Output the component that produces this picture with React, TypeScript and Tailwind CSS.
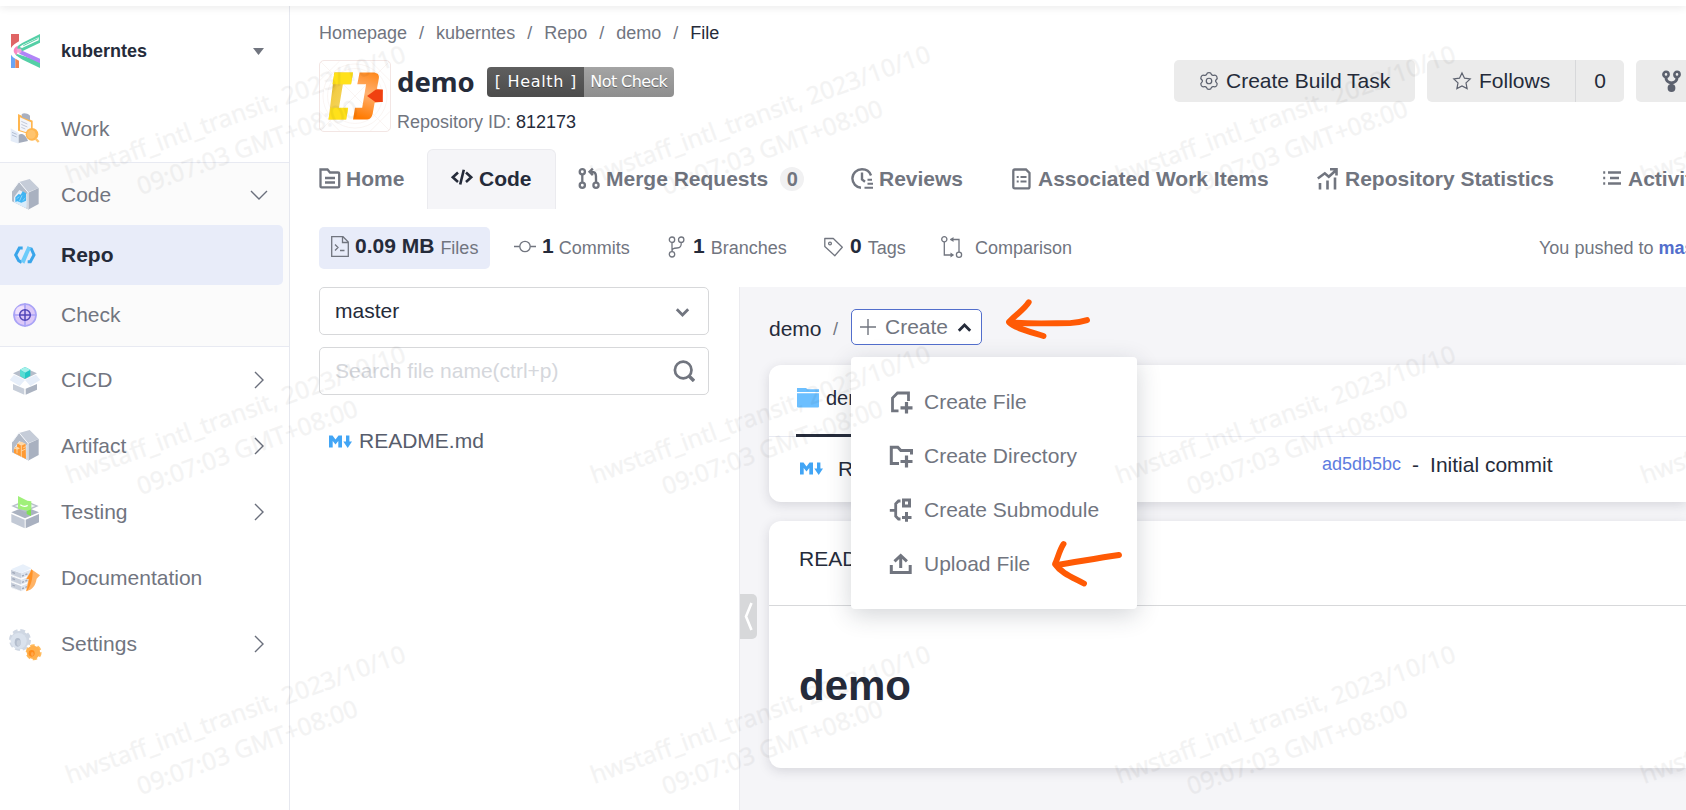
import React from "react";

type IconProps = { className?: string };

/* ---------- sidebar icons ---------- */

const KLogo = () => (
  <svg className="size-8 overflow-visible" viewBox="27 105 96 96">
    <path d="M33 102h24v22c-10 6-19 12-24 20z" fill="#e06464" />
    <path d="M33 164c4 6 8 9 13 12v28H33z" fill="#6aa5f5" />
    <path d="M46 176l11 6v22H46z" fill="#ee8350" />
    <path d="M120 102v26L68 153 46 148c4-8 12-14 22-20z" fill="#54cfa6" />
    <path d="M116 112v9L66 144l-7-3c2-2 5-4 8-6z" fill="#fff" />
    <path d="M113 116L70 137" stroke="#54cfa6" strokeWidth="3" />
    <path d="M44 160l76 24v20l-52-25c-10-5-19-11-24-19z" fill="#54cfa6" />
    <path d="M60 149l60 27v14L58 161z" fill="#b184f7" />
    <path d="M41 152c0-6 4-11 12-15l-2 28c-6-3-10-7-10-13z" fill="#fb86c0" />
    <path d="M50 146h14v12H50z" fill="#f3a4d8" />
  </svg>
);

const WorkIcon = () => (
  <svg className="size-8 overflow-visible" viewBox="27 339 96 96">
    <path d="M54 342l44 20v44l-44-14z" fill="#ffb64f" />
    <path d="M60 352l33 15v34l-33-10z" fill="#f3f5fb" />
    <path d="M65 343c5-5 16-4 25 4v14l-24-9z" fill="#a9b0c0" />
    <path d="M64 364l18 8M64 373l18 8M64 382l12 5" stroke="#c2c8d8" strokeWidth="3" />
    <path d="M32 385l24 14v32l-24-8z" fill="#e4ecf8" />
    <path d="M36 397l14 6M36 405l14 6" stroke="#a9b6cc" strokeWidth="2.5" />
    <path d="M56 405c6-6 20-4 28 18l-28 6z" fill="#a4acbc" />
    <circle cx="96" cy="403" r="19" fill="#ffb64f" />
    <circle cx="94" cy="403" r="13" fill="#ffc46e" />
    <path d="M107 416l9 10" stroke="#ffc46e" strokeWidth="7" />
  </svg>
);

const House = ({ children }: { children: React.ReactNode }) => (
  <svg className="size-8 overflow-visible" viewBox="27 537 96 96">
    <path d="M36 574l21-28 27 31v51l-48-24z" fill="#b3bbc8" />
    <path d="M42 592l16-22 22 12v42l-38-18z" fill="#e9eef6" />
    <path d="M57 546l32-9 27 27-32 13z" fill="#c5ccd8" />
    <path d="M84 578l32-14v48l-32 17z" fill="#a9b1c0" />
    <path d="M37 573l20-28 27 32v51" fill="none" stroke="#f4f6fa" strokeWidth="3" />
    {children}
  </svg>
);

const CodeHouseIcon = () => (
  <House>
    <path d="M40 606l40-6-2 24z" fill="#d9ecfb" />
    <path d="M46 592l10-10 6 2 6-10 10 6v22l-14 6-12-4-6 2z" fill="#3fb4f2" />
    <path d="M50 596l8-6M58 604l8-18M68 602l8-8" stroke="#8ad2fa" strokeWidth="3" />
  </House>
);

const ArtifactIcon = () => (
  <House>
    <path d="M42 596l4-8h4l2-10 12-4 13 6 1 44-36-18z" fill="#ff9a33" />
    <path d="M51 577l13-5 13 6-13 6zM42 591l9-4 9 5-9 5z" fill="#ffd9a8" />
    <path d="M64 584v34M51 597v10M64 600l13-6M70 590l7-3" stroke="#ffdcb0" strokeWidth="2.5" />
  </House>
);

const RepoIcon = () => (
  <svg className="size-8 overflow-visible" viewBox="27 717 96 96">
    <path d="M68 744H58L47 765l9 17 9 5" fill="none" stroke="#3aa5ea" strokeWidth="9" />
    <path d="M86 745l8 2 8 18-11 20h-8" fill="none" stroke="#3aa5ea" strokeWidth="9" />
    <path d="M83 738l10 6-20 47-11-7z" fill="#6ccbfa" />
  </svg>
);

const CheckIcon = () => (
  <svg className="size-8 overflow-visible" viewBox="27 117 96 96">
    <circle cx="75" cy="165" r="33" fill="#dcc8f8" stroke="#a9a3f6" strokeWidth="5" />
    <circle cx="64" cy="156" r="18" fill="#efe0fc" />
    <path d="M75 130v70M40 165h70" stroke="#a9a3f6" strokeWidth="5" />
    <circle cx="75" cy="165" r="16" fill="#d9c6f8" stroke="#5046b8" strokeWidth="4.5" />
    <path d="M75 149v32M59 165h32" stroke="#5046b8" strokeWidth="4.5" />
  </svg>
);

const CicdIcon = () => (
  <svg className="size-8 overflow-visible" viewBox="27 312 96 96">
    <path d="M39 340l36-16 36 16-36 18z" fill="#b5bdca" />
    <path d="M39 372l34 14v18l-34-15z" fill="#c7ced9" />
    <path d="M77 386l34-14v17l-34 15z" fill="#abb3c1" />
    <path d="M75 321l16 8v18l-16 9-15-9v-18z" fill="#23c7c5" />
    <path d="M75 321l16 8-16 9-15-9z" fill="#a6f1ea" />
    <path d="M60 329l15 9v18l-15-9z" fill="#57dcd3" />
    <path d="M42 344l33 16-16 18-30-18zM108 344l-33 16 16 18 30-18z" fill="#e6eef9" />
  </svg>
);

const TestingIcon = () => (
  <svg className="size-8 overflow-visible" viewBox="27 708 96 96">
    <path d="M34 762l40 17v26l-40-18z" fill="#c2c9d5" />
    <path d="M77 779l40-17v25l-40 18z" fill="#a9b1c0" />
    <path d="M34 757l41-17 42 17-42 18z" fill="#aab2c0" />
    <path d="M34 738l41-17 41 17-41 18z" fill="#b7bfcb" />
    <path d="M44 738l31-12 31 12-31 12z" fill="#eef2f7" />
    <path d="M54 708l28 14 12 2v26l-12 2-28-6z" fill="#a0f07a" />
    <path d="M80 754l13-6v20l-13-6z" fill="#7fe056" />
    <path d="M61 734c8 6 16 6 22 2" fill="none" stroke="#fff" strokeWidth="4" />
  </svg>
);

const DocIcon = () => (
  <svg className="size-8 overflow-visible" viewBox="27 186 96 96">
    {[0, 19, 38].map((dy) => (
      <g key={dy} transform={`translate(0 ${dy})`}>
        <path d="M33 209l30 11v16l-30-11z" fill="#c9d0dc" />
        <path d="M63 220l30-11v16l-30 11z" fill="#dde4ee" />
        <path d="M37 217l8 3M66 228l6-2M76 224l6-2" stroke="#a0a8b8" strokeWidth="4" />
        <path d="M33 224l30 12 26-10" fill="none" stroke="#fff" strokeWidth="2" />
      </g>
    ))}
    <path d="M33 208l36-15 26 12-32 15z" fill="#e8f0fa" />
    <path d="M94 208l26 18-10 10c-4 22-12 32-32 38 4-20 6-30 8-38l-8 2c6-12 12-18 16-30z" fill="#ffb366" />
    <path d="M94 208l4 4c0 24-4 44-18 62 4-20 6-30 8-38l-8 2c6-12 12-18 14-30z" fill="#ff9226" />
  </svg>
);

const SettingsIcon = () => (
  <svg className="size-8 overflow-visible" viewBox="27 384 96 96">
    <circle cx="60" cy="420" r="28" fill="none" stroke="#cfd7e3" strokeWidth="10" strokeDasharray="14 8" />
    <circle cx="60" cy="420" r="28" fill="#cfd7e3" />
    <circle cx="56" cy="423" r="24" fill="#dae2ed" />
    <ellipse cx="53" cy="427" rx="9" ry="13" fill="#b3bdcd" />
    <ellipse cx="56" cy="429" rx="6" ry="9" fill="#c7cfdb" />
    <circle cx="101" cy="457" r="20" fill="none" stroke="#ffbb5e" strokeWidth="8" strokeDasharray="12.900 8.100" />
    <circle cx="100" cy="457" r="20" fill="#ffb04d" />
    <ellipse cx="95" cy="460" rx="9" ry="10" fill="#ff8c1a" />
    <ellipse cx="97" cy="462" rx="4" ry="6" fill="#ffa64a" />
  </svg>
);

const Chevron = ({ down }: { down?: boolean }) => (
  <svg className="size-[18px] overflow-visible" viewBox="0 0 18 18" fill="none" stroke="#6a6f7c" strokeWidth="1.4">
    <path d={down ? "M1 5l8 8 8-8" : "M5 1l8 8-8 8"} />
  </svg>
);

type Nav = { label: string; icon: React.ReactNode; chevron?: boolean };

const tools: Nav[] = [
  { label: "CICD", icon: <CicdIcon />, chevron: true },
  { label: "Artifact", icon: <ArtifactIcon />, chevron: true },
  { label: "Testing", icon: <TestingIcon />, chevron: true },
  { label: "Documentation", icon: <DocIcon /> },
  { label: "Settings", icon: <SettingsIcon />, chevron: true },
];

const NavRow = ({ item }: { item: Nav }) => (
  <div className="flex h-[66px] items-center pr-[21px] pb-px pl-[9px]">
    {item.icon}
    <span className="ml-5 flex-1">{item.label}</span>
    {item.chevron && <Chevron />}
  </div>
);

const Sidebar = () => (
  <aside className="flex w-[290px] shrink-0 flex-col border-r border-[#e6e8ef] text-[21px] text-[#71757f]">
    <div className="flex h-[90px] items-center pr-[25px] pl-[9px]">
      <KLogo />
      <span className="ml-5 flex-1 text-lg font-bold text-[#252b3a]">kuberntes</span>
      <svg className="h-[7px] w-[11px]" viewBox="0 0 11 7">
        <path d="M0 0h11L5.5 7z" fill="#71757f" />
      </svg>
    </div>
    <NavRow item={{ label: "Work", icon: <WorkIcon /> }} />
    <div className="border-y border-[#e8eaf2] bg-[#fbfbfb]">
      <div className="flex h-[62px] items-center pt-0.5 pr-[21px] pl-[9px]">
        <CodeHouseIcon />
        <span className="ml-5 flex-1">Code</span>
        <Chevron down />
      </div>
      <div className="mr-1.5 flex h-[60px] items-center rounded-r-[5px] bg-[#e8ecf9] pl-[9px] font-bold text-[#252b3a]">
        <RepoIcon />
        <span className="ml-5">Repo</span>
      </div>
      <div className="flex h-[61px] items-center pb-0.5 pl-[9px]">
        <CheckIcon />
        <span className="ml-5">Check</span>
      </div>
    </div>
    {tools.map((t) => (
      <NavRow key={t.label} item={t} />
    ))}
  </aside>
);

/* ---------- header ---------- */

const crumbs = ["Homepage", "kuberntes", "Repo", "demo"];

const Breadcrumb = () => (
  <div className="flex h-9 items-center text-lg text-[#71757f]">
    {crumbs.map((c) => (
      <React.Fragment key={c}>
        <span>{c}</span>
        <span className="mx-3">/</span>
      </React.Fragment>
    ))}
    <span className="text-[#252b3a]">File</span>
  </div>
);

const ProjectLogo = () => (
  <div className="size-[72px] shrink-0 overflow-hidden rounded-[5px] border border-[#f3e6e4] bg-white">
    <svg className="size-full" viewBox="58 181 214 214">
      <defs>
        <linearGradient id="gold" x1="0" y1="0" x2="1" y2="1">
          <stop offset="0" stopColor="#b98f1c" />
          <stop offset=".35" stopColor="#f3cd45" />
          <stop offset="1" stopColor="#f5dc7a" />
        </linearGradient>
        <linearGradient id="amber" x1=".6" y1="0" x2=".4" y2="1">
          <stop offset="0" stopColor="#ff8a1f" />
          <stop offset=".45" stopColor="#ffb070" />
          <stop offset="1" stopColor="#ff7a00" />
        </linearGradient>
      </defs>
      <g fill="none" stroke="#f7efed" strokeWidth="2">
        <circle cx="165" cy="288" r="98" />
        <circle cx="165" cy="288" r="84" />
        <path d="M58 181l214 214M272 181L58 395M58 240l60-59M212 395l60-60M212 181l60 60M58 335l60 60" />
      </g>
      <path d="M102 216h57l-6 36h-25l-12 73h28l-6 35H84z" fill="url(#gold)" />
      <path d="M102 216h57l-6 36H96zM91 324h53l-6 36H84z" fill="#ffe11a" />
      <path d="M179 216h42c12 0 19 7 17 18l-6 32 18 4-5 36-20 3-6 33c-3 13-10 18-20 18h-40l6-36h22l12-72h-27z" fill="url(#amber)" />
      <path d="M202 288l27-20h21v38h-23z" fill="#f04010" />
    </svg>
  </div>
);

const GearOutline = () => (
  <svg className="size-[18px] shrink-0 overflow-visible" viewBox="0 0 19 19" fill="none" stroke="#5c616e" strokeWidth="1.3">
    <path
      d="M7 2.600Q7.300.6 9.500.6T12 2.600q1 1.500 2.800.9 1.900-.5 3 1.500 1 2-.7 3.200-1.300 1.300 0 2.600 1.700 1.200.7 3.200-1.100 2-3 1.500-1.800-.6-2.800.9-.3 2-2.500 2T7 16.400q-1-1.500-2.800-.9-1.900.5-3-1.500-1-2 .7-3.200 1.300-1.300 0-2.600Q.2 7 1.200 5q1.100-2 3-1.500Q6 4.100 7 2.600z"
      strokeLinejoin="round"
    />
    <circle cx="9.500" cy="9.500" r="2.900" />
  </svg>
);

const StarOutline = () => (
  <svg className="h-[18px] w-[18px] overflow-visible" viewBox="0 0 18 18" fill="none" stroke="#5c616e" strokeWidth="1.2">
    <path d="M9 1l2.500 5.200 5.700.7-4.200 4 1.100 5.700L9 13.900l-5.100 2.700L5 10.900l-4.200-4 5.700-.7z" />
  </svg>
);

const ForkSolid = () => (
  <svg className="h-[22px] w-[19px] shrink-0" viewBox="0 0 19 22" fill="none" stroke="#5c616e">
    <circle cx="4" cy="4.4" r="2.6" strokeWidth="2.6" />
    <circle cx="15" cy="4.4" r="2.6" strokeWidth="2.6" />
    <path d="M4 7.500c0 4 2 4.800 5.500 5.500 3.500-.7 5.500-1.500 5.500-5.500M9.500 12v5" strokeWidth="3" />
    <circle cx="9.500" cy="18" r="3.900" fill="#5c616e" stroke="none" />
  </svg>
);

const ProjectHeader = () => (
  <div className="mt-[9px] flex h-[72px]">
    <ProjectLogo />
    <div className="ml-1.5 flex flex-col">
      <div className="flex h-11 shrink-0 items-center">
        <h1 className="-mt-px font-['Noto_Sans'] text-[27.500px] leading-none font-bold text-[#252b3a]">demo</h1>
        <div className="ml-[12px] flex h-[30px] overflow-hidden rounded-[4px] font-['DejaVu_Sans'] text-base leading-[30px] text-white [text-shadow:0_1px_0_rgba(0,0,0,.35)]">
          <span className="w-[97px] bg-linear-to-b from-[#5f5f5f] to-[#4c4c4c] pl-px text-center tracking-[0.700px] whitespace-pre">[ Health ]</span>
          <span className="w-[90px] bg-linear-to-b from-[#a4a4a4] to-[#8e8e8e] text-center tracking-[-0.600px] whitespace-nowrap">Not Check</span>
        </div>
      </div>
      <div className="mt-1.5 shrink-0 text-lg leading-6 text-[#71757f]">
        Repository ID: <span className="text-[#252b3a]">812173</span>
      </div>
    </div>
    <div className="ml-auto flex h-[42px] w-[512px] shrink-0 gap-3 text-[21px] text-[#252b3a]">
      <button className="flex w-[241px] shrink-0 items-center gap-2 rounded-[5px] bg-[#ebebeb] pl-[26px] whitespace-nowrap">
        <GearOutline />
        Create Build Task
      </button>
      <div className="flex w-[197px] shrink-0 rounded-[5px] bg-[#ebebeb]">
        <button className="flex w-[149px] items-center gap-2 border-r border-[#d7d8da] pl-[26px]">
          <StarOutline />
          Follows
        </button>
        <button className="flex-1">0</button>
      </div>
      <button className="flex flex-1 items-center rounded-l-[5px] bg-[#ebebeb] pl-[26px]">
        <ForkSolid />
      </button>
    </div>
  </div>
);

/* ---------- tabs ---------- */

const tabSvg = "h-[21px] w-[22px] shrink-0 overflow-visible";

const HomeTabIcon = () => (
  <svg className={tabSvg} viewBox="0 0 22 21" fill="none" stroke="currentColor" strokeWidth="2.300">
    <path d="M1.500 1.500h7l2.500 3h8q1.200 0 1.200 1.200v12.500q0 1.200-1.200 1.200H2.500q-1 0-1-1.200z" />
    <path d="M6 10h10M6 14.500h10" />
  </svg>
);
const CodeTabIcon = () => (
  <svg className={tabSvg} viewBox="0 0 22 21" fill="none" stroke="currentColor" strokeWidth="2.600">
    <path d="M7 4.500L1.800 9.300 7 14M15 4.500l5.200 4.800L15 14M12.800 1.800L9.200 16.500" />
  </svg>
);
const MergeTabIcon = () => (
  <svg className={tabSvg} viewBox="0 0 22 21" fill="none" stroke="currentColor" strokeWidth="2.300">
    <circle cx="4.300" cy="3.700" r="2.600" />
    <circle cx="4.300" cy="17.300" r="2.600" />
    <circle cx="18" cy="17.300" r="2.600" />
    <path d="M4.300 6.300v8.400M18 14.700V8c0-3-1.500-4.200-4.500-4.200h-1.700M14.800.6l-3.300 3.200 3.300 3.300" />
  </svg>
);
const ReviewTabIcon = () => (
  <svg className={tabSvg} viewBox="0 0 22 21" fill="none" stroke="currentColor" strokeWidth="2.400">
    <path d="M20 7.500C18.700 3.700 15 1.200 11 1.200c-5.200 0-9.600 4.200-9.600 9.400 0 4.800 3.800 8.800 8.600 9.200M11 4.500v7l3 2.300" />
    <path d="M16.500 11.700h4.500M16.500 15.700H22M13.500 19.700H22" strokeWidth="2" />
  </svg>
);
const WorkItemTabIcon = () => (
  <svg className="h-[22px] w-[19px] shrink-0" viewBox="0 0 19 22" fill="none" stroke="currentColor" strokeWidth="2.300">
    <path d="M2.800 1.500H14l3.500 3.500v13.700q0 1.700-1.700 1.700H2.800q-1.500 0-1.500-1.700V3.200q0-1.700 1.500-1.700z" />
    <path d="M4.700 9h2M8.500 9h6M4.700 13.500h2M8.500 13.500h6" strokeWidth="1.900" />
  </svg>
);
const StatsTabIcon = () => (
  <svg className={tabSvg} viewBox="0 0 22 21" fill="none" stroke="currentColor" strokeWidth="2.600">
    <path d="M.8 10.500l7-5.200 4 3.500 7.200-6.500M13 1.300h6.500v6.200" />
    <path d="M3 15v6.500M10.500 12.500v9M18 9.500v12" />
  </svg>
);
const ActivityTabIcon = () => (
  <svg className="h-[21px] w-5 shrink-0" viewBox="0 0 20 21" fill="none" stroke="currentColor" strokeWidth="2.400">
    <path d="M6 4.500h13M8 10h9M6 15.500h13" />
    <path d="M1.200 4.500h2M1.200 10h2M1.200 15.500h2" />
  </svg>
);

const tab = "flex shrink-0 items-center pb-px";

const Tabs = () => (
  <div className="mt-[17px] flex h-[60px] text-[21px] font-bold whitespace-nowrap text-[#71757f]">
    <div className={`${tab} w-[108px] gap-[5px]`}>
      <HomeTabIcon /> Home
    </div>
    <div className="flex w-[129px] shrink-0 items-center gap-[6px] rounded-t-[6px] border border-b-0 border-[#ebebef] bg-[#f5f5f8] pb-0.5 pl-[23px] text-[#252b3a]">
      <CodeTabIcon /> Code
    </div>
    <div className={`${tab} w-[295px] gap-[6px] pl-[22px]`}>
      <MergeTabIcon /> Merge Requests
      <span className="ml-1.5 flex size-6 items-center justify-center rounded-full bg-[#f1f1f2] text-xl">0</span>
    </div>
    <div className={`${tab} w-[161px] gap-[6px]`}>
      <ReviewTabIcon /> Reviews
    </div>
    <div className={`${tab} w-[305px] gap-[7px]`}>
      <WorkItemTabIcon /> Associated Work Items
    </div>
    <div className={`${tab} w-[285px] gap-[6px]`}>
      <StatsTabIcon /> Repository Statistics
    </div>
    <div className={`${tab} gap-[6px]`}>
      <ActivityTabIcon /> Activities
    </div>
  </div>
);

/* ---------- repository stats ---------- */

const thin = { fill: "none", stroke: "#71757f", strokeWidth: 1.3 };

const StatsBar = () => (
  <div className="mt-[18px] flex h-[42px] text-lg whitespace-nowrap text-[#71757f]">
    <div className="flex w-[171px] items-center rounded-[5px] bg-[#e8ecf9] pb-[3px] pl-3">
      <svg className="h-[21px] w-[18px]" viewBox="0 0 18 21" {...thin}>
        <path d="M.7.7H12l5.300 5.300v14.300H.7zM11.500.9v5.600h5.600M4 8.500l3 3-3 3M9 14.500h4.500" />
      </svg>
      <b className="ml-1.5 text-[21px] text-[#252b3a]">0.09 MB</b>
      <span className="ml-1.5 pt-0.5">Files</span>
    </div>
    <div className="flex w-[154px] items-center pb-[3px] pl-6">
      <svg className="h-[21px] w-[22px]" viewBox="0 0 22 21" {...thin}>
        <circle cx="11" cy="10.500" r="5.200" />
        <path d="M0 10.500h5.800M16.200 10.500H22" />
      </svg>
      <b className="ml-[6px] text-[21px] text-[#252b3a]">1</b>
      <span className="ml-[5px] pt-0.5">Commits</span>
    </div>
    <div className="flex w-[156px] items-center pb-[3px] pl-6">
      <svg className="h-[22px] w-[17px]" viewBox="0 0 17 22" {...thin}>
        <circle cx="4" cy="3.700" r="2.700" />
        <circle cx="13.200" cy="3.700" r="2.700" />
        <circle cx="4" cy="18.300" r="2.700" />
        <path d="M4 6.400v9.200M13.200 6.400c.3 4-1 5.600-4.200 5.600-3.500 0-5 .5-5 3.600" />
      </svg>
      <b className="ml-[8px] text-[21px] text-[#252b3a]">1</b>
      <span className="ml-[6px] pt-0.5">Branches</span>
    </div>
    <div className="flex w-[141px] items-center pb-[3px] pl-6">
      <svg className="h-[20px] w-[19px]" viewBox="0 0 19 20" {...thin}>
        <path d="M.8 1.500h8.500l9 8.700-7.500 8.500L.8 9.500z" strokeLinejoin="round" />
        <circle cx="6" cy="6.500" r="1.400" />
      </svg>
      <b className="ml-[7px] text-[21px] text-[#252b3a]">0</b>
      <span className="ml-[6px] pt-0.5">Tags</span>
    </div>
    <div className="flex items-center pb-[3px]">
      <svg className="h-[22px] w-[22px] overflow-visible" viewBox="0 0 22 22" {...thin}>
        <circle cx="3.300" cy="3.300" r="2.600" />
        <circle cx="18" cy="18.700" r="2.600" />
        <path d="M3.300 6v13h8.500M18 16V3.500H9.500" />
        <path d="M12.500 1L8.800 3.500l3.700 2.500zM9.500 16.500l3.700 2.500-3.700 2.500z" fill="#71757f" stroke="none" />
      </svg>
      <span className="ml-3 pt-0.5">Comparison</span>
    </div>
    <div className="ml-auto flex w-[147px] items-center pb-[3px]">
      <span className="pt-0.5">
        You pushed to <b className="text-[#526ecc]">master</b>
      </span>
    </div>
  </div>
);

/* ---------- file tree ---------- */

const MdIcon = () => (
  <svg className="h-[13px] w-[23px] shrink-0" viewBox="0 0 23 13" fill="#42a5f5">
    <path d="M0 12.500V.5h3.500L6.500 4.500l3-4H13v12H9.300V6L6.500 9.500 3.700 6v6.500zM17 .5h3.400v6H23L18.700 13l-4.400-6.500H17z" />
  </svg>
);

const FileTree = () => (
  <div className="flex w-[390px] shrink-0 flex-col text-[21px]">
    <div className="flex h-12 items-center justify-between rounded-[5px] border border-[#d7d8da] pr-[19px] pb-px pl-[15px] text-[#252b3a]">
      master
      <svg className="mt-1 h-[9px] w-[13px] overflow-visible" viewBox="0 0 13 9" fill="none" stroke="#71757f" strokeWidth="2.800">
        <path d="M.8 1.300l5.700 5.700 5.700-5.700" />
      </svg>
    </div>
    <div className="mt-3 flex h-12 items-center justify-between rounded-[5px] border border-[#d7d8da] pr-[13px] pb-px pl-[15px] text-[#d5d7dc]">
      Search file name(ctrl+p)
      <svg className="size-[22px]" viewBox="0 0 22 22" fill="none" stroke="#71757f" strokeWidth="2.700">
        <circle cx="10.200" cy="10" r="8.300" />
        <path d="M15.500 15.500l5.500 5.500" strokeWidth="3.400" />
      </svg>
    </div>
    <div className="mt-[30px] flex h-8 items-center gap-[7px] pl-2.5 text-[#575d6c]">
      <MdIcon />
      README.md
    </div>
  </div>
);

/* ---------- create menu ---------- */

const menuSvg = "size-6 shrink-0";

const menu = [
  {
    label: "Create File",
    icon: (
      <svg className={menuSvg} viewBox="0 0 24 24" fill="none" stroke="#71757f" strokeWidth="2.800">
        <path d="M9.500 20.800H3.500V8l5-5H19.500v8" />
        <path d="M17.500 12v11.500M11.500 17.800H23.500" strokeWidth="3.200" />
      </svg>
    ),
  },
  {
    label: "Create Directory",
    icon: (
      <svg className={menuSvg} viewBox="0 0 24 24" fill="none" stroke="#71757f" strokeWidth="3">
        <path d="M10 19.500H2.300V3.300h6.500l3 3.200h10.700v4" />
        <path d="M17.500 11.500v12M11.500 17.500H23.500" strokeWidth="3.200" />
      </svg>
    ),
  },
  {
    label: "Create Submodule",
    icon: (
      <svg className={menuSvg} viewBox="0 0 24 24" fill="none" stroke="#71757f" strokeWidth="2.800">
        <path d="M.8 12.300h6M11.500 3H9.500L6.700 5.800v12.400L9.500 21H11.500" />
        <path d="M14.500 2h6v6h-6z" strokeWidth="3" />
        <path d="M17.500 14v9.800M13 19.500h9.500" strokeWidth="3" />
      </svg>
    ),
  },
  {
    label: "Upload File",
    icon: (
      <svg className={menuSvg} viewBox="0 0 24 24" fill="none" stroke="#71757f" strokeWidth="3">
        <path d="M2.300 13v7.500h18.900V13" />
        <path d="M11.700 16V4.500M5.500 9.300l6.200-5.800 6.200 5.800" />
      </svg>
    ),
  },
];

const CreateMenu = () => (
  <div className="absolute top-[47px] -left-px z-10 flex w-[286px] flex-col rounded-[4px] bg-white py-[18px] text-[#71757f] shadow-[0_6px_24px_rgba(37,43,58,.2)]">
    {menu.map((m) => (
      <div key={m.label} className="flex h-[54px] items-center gap-[11px] pb-px pl-[38px]">
        {m.icon}
        {m.label}
      </div>
    ))}
  </div>
);

/* ---------- content ---------- */

const cardShadow = "shadow-[0_3px_12px_rgba(37,43,58,.15)]";

const Content = () => (
  <div className="relative ml-[30px] flex flex-1 flex-col border-l border-[#ebebef] bg-[#f5f5f8] pl-[29px] text-[21px] text-[#252b3a]">
    <div className="absolute top-[307px] left-0 flex h-[45px] w-[17px] items-center justify-center rounded-r-[5px] bg-[#d7d8da]">
      <svg className="h-[29px] w-[9px]" viewBox="0 0 9 29" fill="none" stroke="#fff" strokeWidth="2.600">
        <path d="M7.500 1L2 14.500 7.500 28" />
      </svg>
    </div>

    <div className="mt-[22px] flex h-9 items-center">
      <span className="w-[64px] pt-[3px]">demo</span>
      <span className="w-[18px] pt-1 text-lg text-[#71757f]">/</span>
      <div className="relative flex h-9 w-[131px] items-center rounded-[5px] border border-[#526ecc] bg-white pl-2 text-[#71757f]">
        <svg className="size-4" viewBox="0 0 16 16" stroke="#71757f" strokeWidth="1.400">
          <path d="M8 0v16M0 8h16" />
        </svg>
        <span className="ml-[9px]">Create</span>
        <svg className="ml-[10px] h-[9px] w-[13px] overflow-visible" viewBox="0 0 13 9" fill="none" stroke="#252b3a" strokeWidth="2.800">
          <path d="M.8 7.700L6.500 2l5.700 5.700" />
        </svg>
        <CreateMenu />
      </div>
    </div>

    <section className={`mt-5 h-[137px] rounded-l-[12px] bg-white ${cardShadow}`}>
      <div className="flex h-[72px] border-b border-[#e8eaf2] pl-[27px]">
        <div className="-mb-px flex w-[90px] items-center gap-[7px] border-b-[3px] border-[#252b3a] pb-1 pl-px text-xl">
          <svg className="h-5 w-[22px] shrink-0" viewBox="0 0 22 20" fill="#6cbfff">
            <path d="M0 0h9l1.500 1.200H22V4H0zM0 5.200h22V18.500q0 1-1 1H1q-1 0-1-1z" />
          </svg>
          demo
        </div>
      </div>
      <div className="flex h-[65px] items-center pb-0.5 pl-[31px]">
        <MdIcon />
        <span className="ml-[15px] w-[484px]">README.md</span>
        <span className="-mt-2 flex items-baseline">
          <span className="-translate-y-0.5 text-lg text-[#5e7ce0]">ad5db5bc</span>
          <span className="mx-[11px]">-</span>
          <span>Initial commit</span>
        </span>
      </div>
    </section>

    <section className={`mt-[19px] h-[247px] rounded-l-[12px] bg-white ${cardShadow}`}>
      <div className="flex h-[85px] items-center border-b border-[#d7d8da] pb-2 pl-[30px]">README.md</div>
      <h2 className="mt-[55px] pl-[30px] text-[42px] leading-[50px] font-bold">demo</h2>
    </section>
  </div>
);

/* ---------- overlays ---------- */

const stamps = [130, 430, 730].flatMap((y) => [241, 766, 1291, 1816].map((x) => ({ x, y })));

const Watermark = () => (
  <div className="pointer-events-none absolute inset-0 z-20 overflow-hidden font-['Noto_Sans'] text-[24.400px] leading-[35px] text-black opacity-[0.045] [-webkit-text-stroke:0.400px_black]">
    {stamps.map(({ x, y }) => (
      <div
        key={`${x}-${y}`}
        className="absolute w-[400px] -translate-x-1/2 -translate-y-1/2 -rotate-20 text-center whitespace-nowrap"
        style={{ left: x, top: y }}
      >
        <div>hwstaff_intl_transit, 2023/10/10</div>
        <div>09:07:03 GMT+08:00</div>
      </div>
    ))}
  </div>
);

const Arrow = ({ className, head, shaft }: IconProps & { head: string; shaft: string }) => (
  <svg className={className} viewBox="0 0 90 50" fill="none" stroke="#ff5a05" strokeWidth="5.900" strokeLinecap="round" strokeLinejoin="round">
    <path d={head} />
    <path d={shaft} />
  </svg>
);

export default function App() {
  return (
    <div className="relative flex h-[810px] w-full flex-col overflow-hidden bg-white font-['Liberation_Sans',Arial,sans-serif]">
      <div className="z-10 h-1.5 shrink-0 bg-white shadow-[0_1px_8px_rgba(0,0,0,.11)]" />
      <div className="flex min-h-0 flex-1">
        <Sidebar />
        <main className="flex min-w-0 flex-1 flex-col pt-[9px] pl-[29px]">
          <Breadcrumb />
          <ProjectHeader />
          <Tabs />
          <StatsBar />
          <div className="mt-[18px] flex min-h-0 flex-1">
            <FileTree />
            <Content />
          </div>
        </main>
      </div>
      <Watermark />
      <Arrow
        className="absolute top-[297px] left-[1002px] z-30 h-[50px] w-[90px]"
        head="M26.700 5.300C22 13 13 18 7 25c5 6 22 10 34.500 14"
        shaft="M8 25.300c20 2 45 .8 60 .8 7-.2 12-1.500 17-3"
      />
      <Arrow
        className="absolute top-[539px] left-[1047px] z-30 h-[50px] w-[90px]"
        head="M16.500 5C12 12 11 19 8 25c6 9 18 13.500 29 19.500"
        shaft="M10 26c20-3 40-7 62-10"
      />
    </div>
  );
}
